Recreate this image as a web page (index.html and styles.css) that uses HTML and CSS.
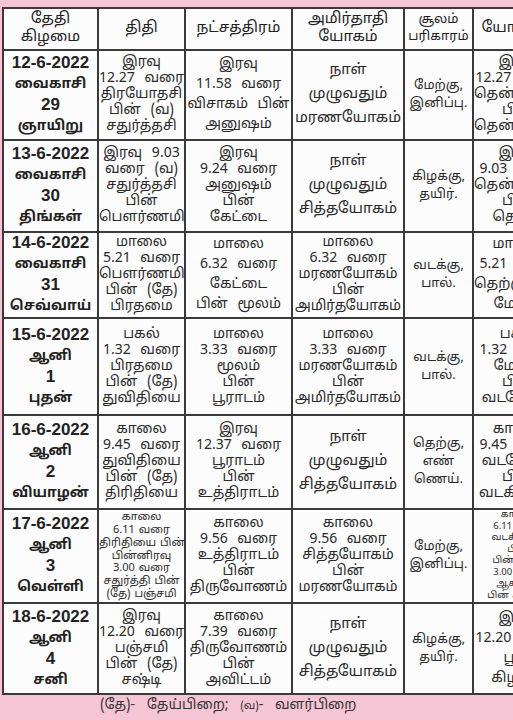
FILE: index.html
```html
<!DOCTYPE html>
<html lang="ta">
<head>
<meta charset="utf-8">
<title>பஞ்சாங்கம்</title>
<link rel="stylesheet" href="styles.css">
</head>
<body>
<div class="page">
  <div class="clip">
    <table class="cal">
      <colgroup>
        <col class="c-date"><col class="c-thithi"><col class="c-star"><col class="c-yoga"><col class="c-soolam"><col class="c-yogini">
      </colgroup>
      <thead>
        <tr class="r-head">
          <th>தேதி<br>கிழமை</th>
          <th>திதி</th>
          <th>நட்சத்திரம்</th>
          <th>அமிர்தாதி<br>யோகம்</th>
          <th class="small">சூலம்<br>பரிகாரம்</th>
          <th>யோகினி</th>
        </tr>
      </thead>
      <tbody>
        <tr class="r1">
          <td class="date"><span class="dnum">12-6-2022</span><br>வைகாசி<br><span class="dnum">29</span><br>ஞாயிறு</td>
          <td class="tight">இரவு<br>12.27 வரை<br>திரயோதசி<br>பின் (வ)<br>சதுர்த்தசி</td>
          <td>இரவு<br>11.58 வரை<br>விசாகம் பின்<br>அனுஷம்</td>
          <td class="loose">நாள்<br>முழுவதும்<br>மரணயோகம்</td>
          <td class="small">மேற்கு,<br>இனிப்பு.</td>
          <td class="tight">இரவு<br>12.27 வரை<br>தென்கிழக்கு<br>பின்<br>தென்மேற்கு</td>
        </tr>
        <tr class="r2">
          <td class="date"><span class="dnum">13-6-2022</span><br>வைகாசி<br><span class="dnum">30</span><br>திங்கள்</td>
          <td class="tight">இரவு 9.03<br>வரை (வ)<br>சதுர்த்தசி<br>பின்<br>பௌர்ணமி</td>
          <td class="tight">இரவு<br>9.24 வரை<br>அனுஷம்<br>பின்<br>கேட்டை</td>
          <td class="loose">நாள்<br>முழுவதும்<br>சித்தயோகம்</td>
          <td class="small">கிழக்கு,<br>தயிர்.</td>
          <td class="tight">இரவு<br>9.03 வரை<br>தென்மேற்கு<br>பின்<br>தெற்கு</td>
        </tr>
        <tr class="r3">
          <td class="date"><span class="dnum">14-6-2022</span><br>வைகாசி<br><span class="dnum">31</span><br>செவ்வாய்</td>
          <td class="tight">மாலை<br>5.21 வரை<br>பௌர்ணமி<br>பின் (தே)<br>பிரதமை</td>
          <td>மாலை<br>6.32 வரை<br>கேட்டை<br>பின் மூலம்</td>
          <td class="tight">மாலை<br>6.32 வரை<br>மரணயோகம்<br>பின்<br>அமிர்தயோகம்</td>
          <td class="small">வடக்கு,<br>பால்.</td>
          <td>மாலை<br>5.21 வரை<br>தெற்கு பின்<br>மேற்கு</td>
        </tr>
        <tr class="r4">
          <td class="date"><span class="dnum">15-6-2022</span><br>ஆனி<br><span class="dnum">1</span><br>புதன்</td>
          <td class="tight">பகல்<br>1.32 வரை<br>பிரதமை<br>பின் (தே)<br>துவிதியை</td>
          <td class="tight">மாலை<br>3.33 வரை<br>மூலம்<br>பின்<br>பூராடம்</td>
          <td class="tight">மாலை<br>3.33 வரை<br>மரணயோகம்<br>பின்<br>அமிர்தயோகம்</td>
          <td class="small">வடக்கு,<br>பால்.</td>
          <td class="tight">பகல்<br>1.32 வரை<br>மேற்கு<br>பின்<br>வடமேற்கு</td>
        </tr>
        <tr class="r5">
          <td class="date"><span class="dnum">16-6-2022</span><br>ஆனி<br><span class="dnum">2</span><br>வியாழன்</td>
          <td class="tight">காலை<br>9.45 வரை<br>துவிதியை<br>பின் (தே)<br>திரிதியை</td>
          <td class="tight">இரவு<br>12.37 வரை<br>பூராடம்<br>பின்<br>உத்திராடம்</td>
          <td class="loose">நாள்<br>முழுவதும்<br>சித்தயோகம்</td>
          <td class="small">தெற்கு,<br>எண்<br>ணெய்.</td>
          <td class="tight">காலை<br>9.45 வரை<br>வடமேற்கு<br>பின்<br>வடகிழக்கு</td>
        </tr>
        <tr class="r6">
          <td class="date"><span class="dnum">17-6-2022</span><br>ஆனி<br><span class="dnum">3</span><br>வெள்ளி</td>
          <td class="tiny">காலை<br>6.11 வரை<br>திரிதியை பின்<br>பின்னிரவு<br>3.00 வரை<br>சதுர்த்தி பின்<br>(தே) பஞ்சமி</td>
          <td class="tight">காலை<br>9.56 வரை<br>உத்திராடம்<br>பின்<br>திருவோணம்</td>
          <td class="tight">காலை<br>9.56 வரை<br>சித்தயோகம்<br>பின்<br>மரணயோகம்</td>
          <td class="small">மேற்கு,<br>இனிப்பு.</td>
          <td class="tinier">காலை<br>6.11 வரை<br>வடகிழக்கு<br>பின்<br>பின்னிரவு<br>3.00 வரை<br>ஆகாயம்<br>பின் கிழக்கு</td>
        </tr>
        <tr class="r7">
          <td class="date"><span class="dnum">18-6-2022</span><br>ஆனி<br><span class="dnum">4</span><br>சனி</td>
          <td class="tight">இரவு<br>12.20 வரை<br>பஞ்சமி<br>பின் (தே)<br>சஷ்டி</td>
          <td class="tight">காலை<br>7.39 வரை<br>திருவோணம்<br>பின்<br>அவிட்டம்</td>
          <td class="loose">நாள்<br>முழுவதும்<br>சித்தயோகம்</td>
          <td class="small">கிழக்கு,<br>தயிர்.</td>
          <td>இரவு<br>12.20 வரை<br>பூமி<br>கிழக்கு</td>
        </tr>
      </tbody>
    </table>
  </div>
  <p class="note">(தே)- தேய்பிறை; <span class="mini">(வ)</span>- வளர்பிறை</p>
</div>
</body>
</html>
```
FILE: styles.css
```css
html, body {
  margin: 0;
  padding: 0;
  background: #f6c5d5;
  overflow: hidden;
}
.page {
  width: 513px;
  height: 720px;
  overflow: hidden;
  font-family: "Noto Sans Tamil", "Lohit Tamil", "Noto Sans", "DejaVu Sans", sans-serif;
  color: #2a2a2a;
}
.clip {
  padding: 7px 0 0 2px;
  width: 511px;
  overflow: hidden;
}
.cal {
  border-collapse: collapse;
  table-layout: fixed;
  width: 560px;
  background: #fcfcfc;
}
.c-date { width: 95px; }
.c-thithi { width: 87px; }
.c-star { width: 107px; }
.c-yoga { width: 112px; }
.c-soolam { width: 69px; }
.c-yogini { width: 90px; }
.cal th, .cal td {
  border: 2px solid #3a3a3a;
  text-align: center;
  vertical-align: middle;
  padding: 0;
  font-weight: normal;
  white-space: nowrap;
  overflow: hidden;
}
.cal th {
  font-size: 15px;
  line-height: 18px;
  color: #222;
}
.cal th.small { font-size: 13px; line-height: 17px; }
.cal td {
  font-size: 14px;
  line-height: 20px;
  word-spacing: 6px;
}
.cal td.tight { line-height: 16px; }
.cal td.loose { font-size: 15px; line-height: 24px; word-spacing: 0; }
.cal td.small { font-size: 13px; line-height: 18px; word-spacing: 0; }
.cal td.tiny { font-size: 11px; line-height: 12.8px; word-spacing: 1px; }
.cal td.tinier { font-size: 9.5px; line-height: 11.5px; word-spacing: 1px; }
.cal td.date {
  font-weight: bold;
  font-size: 14px;
  line-height: 20px;
  color: #222;
  word-spacing: 0;
}
.dnum {
  font-family: "Liberation Sans", sans-serif;
  font-size: 17px;
}
.r-head { height: 42px; }
.r1 { height: 90px; }
.r2 { height: 92px; }
.r3 { height: 84px; }
.r4 { height: 97px; }
.r5 { height: 94px; }
.r6 { height: 94px; }
.r7 { height: 91px; }
.note {
  margin: 2px 0 0 100px;
  font-size: 14px;
  line-height: 18px;
  color: #333;
  word-spacing: 8px;
}
.note .mini { font-size: 11px; }
```
